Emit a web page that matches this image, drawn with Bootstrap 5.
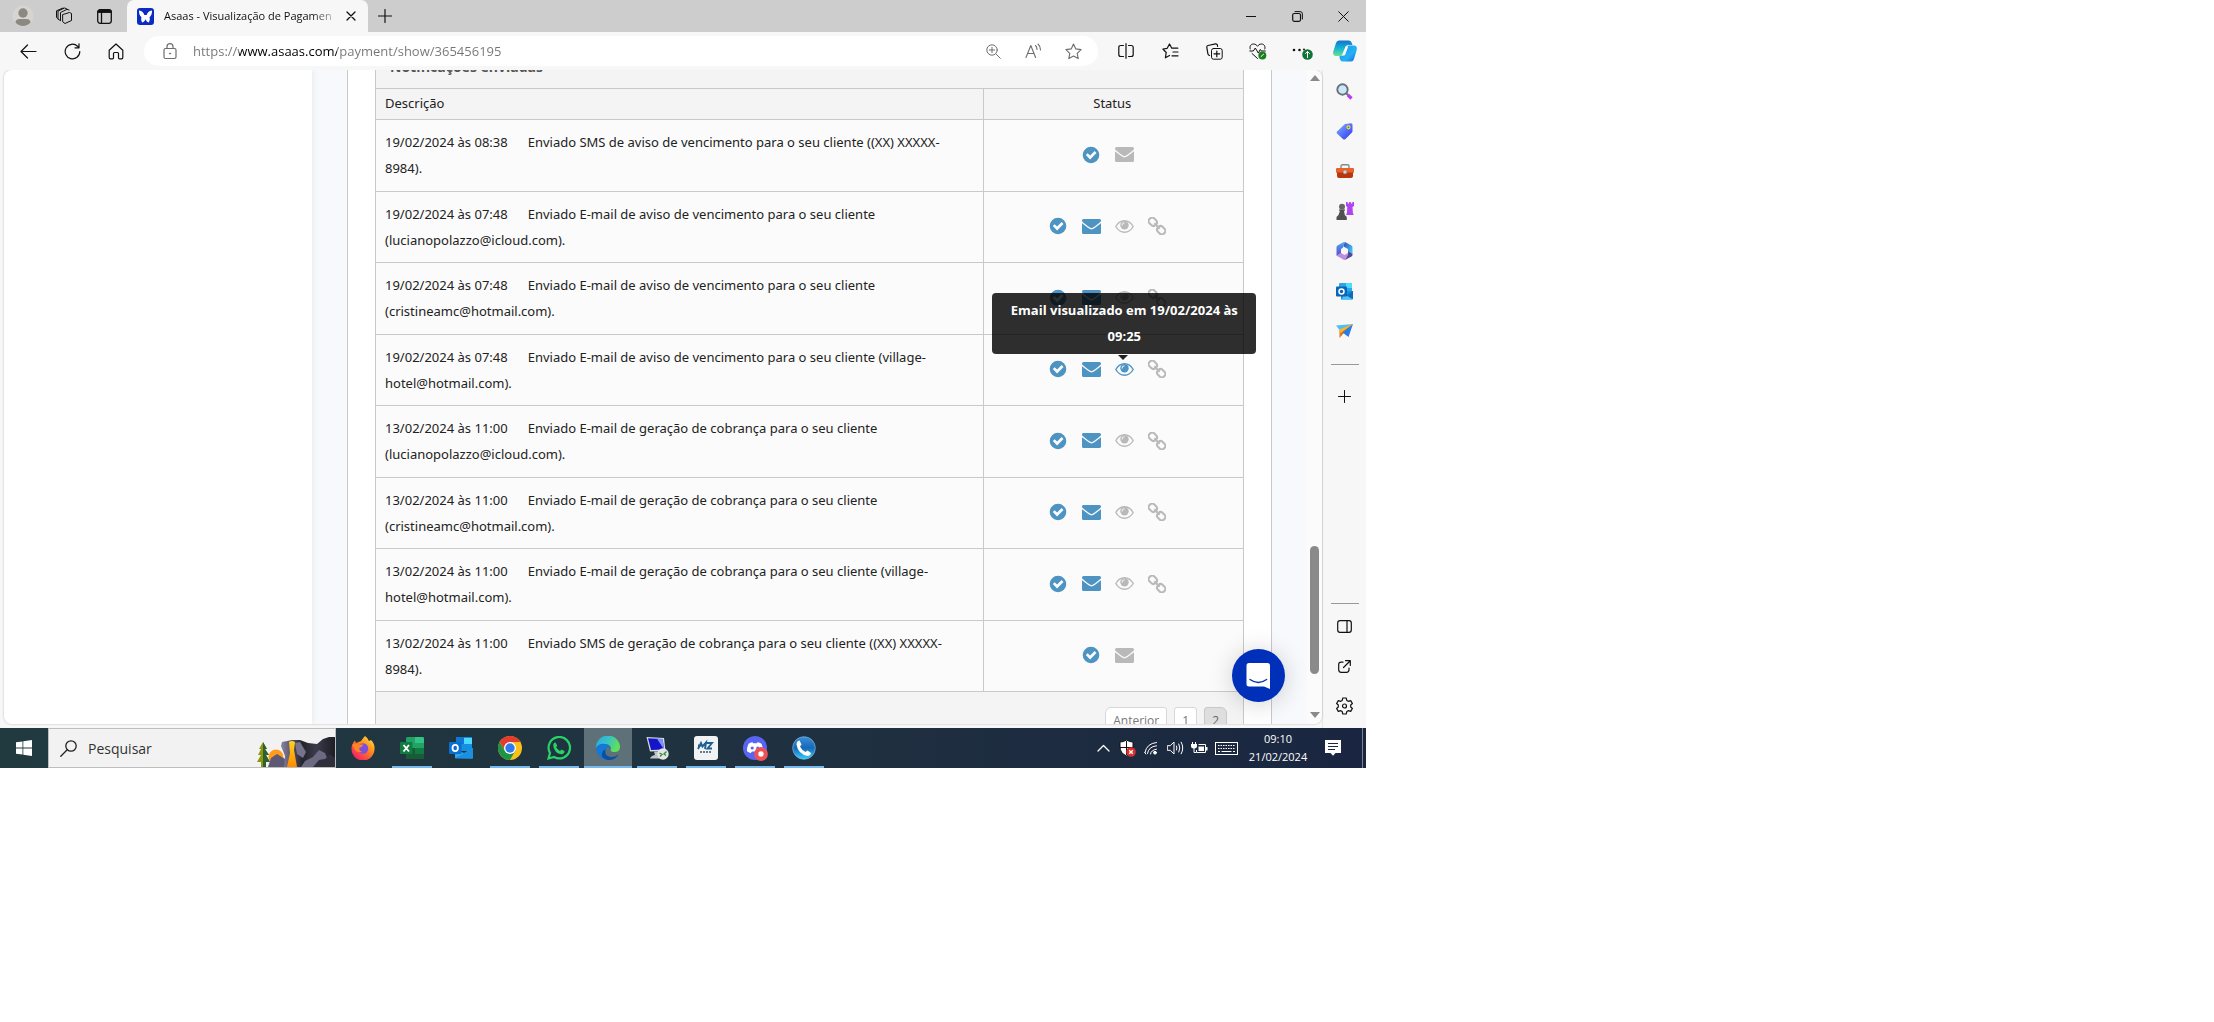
<!DOCTYPE html>
<html lang="pt-BR">
<head>
    <meta charset="UTF-8">
    <meta name="viewport" content="width=device-width, initial-scale=1">
    <title>Asaas - Visualização de Pagamento</title>
    <link href="https://cdn.jsdelivr.net/npm/bootstrap@5.3.0/dist/css/bootstrap.min.css" rel="stylesheet">
    <style>
        :root {
            --line: #c9c9c9;
            --azul: #4e94c3;
            --cinza: #b9b9b9;
        }
        body {
            font-family: "Open Sans", "Noto Sans", sans-serif;
            font-size: 13px;
            line-height: 26px;
            color: #222;
            background: #fff;
        }
        button, input { font: inherit; color: inherit; }
        button { background: none; border: 0; padding: 0; }
        svg { display: block; flex: none; }
        .ln { fill: none; stroke: currentColor; stroke-linecap: round; stroke-linejoin: round; }

        .screen-grid {
            display: grid;
            height: 100vh;
            grid-template-columns: minmax(0, 1366fr) 848fr;
            grid-template-rows: minmax(0, 768fr) 254fr;
        }

        /* navegador */
        .tab-strip { height: 32px; background: #cdcdcd; padding-left: 2px; color: #111; }
        .strip-btn { width: 41px; height: 32px; }
        .tab-active { width: 241px; height: 32px; margin-left: 2px; padding: 0 8px 0 10px; background: #f7f7f7; border-radius: 7px 7px 0 0; }
        .tab-title { font-size: 11px; white-space: nowrap; margin-left: 10px;
            -webkit-mask-image: linear-gradient(to right, #000 88%, rgba(0, 0, 0, .3)); mask-image: linear-gradient(to right, #000 88%, rgba(0, 0, 0, .3)); }
        .tab-close { width: 18px; height: 18px; }
        .new-tab { width: 34px; height: 32px; }
        .win-btn { width: 46px; height: 32px; }
        .tool-bar { height: 38px; background: #f7f7f7; padding-left: 6px; color: #111; }
        .tool-btn { width: 44px; height: 36px; }
        .copilot-btn { width: 42px; height: 36px; }
        .address-pill { height: 30px; margin: 0 6px; padding: 0 5px 0 14px; border-radius: 15px; background: #fff; color: #6e6e6e; }
        .address-pill button { width: 40px; height: 30px; }
        .address-pill .lock-btn { width: 24px; }
        .url-input {
            font-size: 13px;
            border: 0;
            outline: 0;
            padding: 0;
            margin-left: 11px;
            height: 30px;
            color: transparent;
            background: linear-gradient(to right, #757575 46px, #000 46px, #000 144px, #757575 144px);
            -webkit-background-clip: text;
            background-clip: text;
        }

        /* janela da página */
        .browser-body { background: #f7f7f7; }
        .page-view { margin: 0 0 4px 4px; background: #f7f9fc; border-radius: 8px; box-shadow: 0 0 2px #aaa; overflow: hidden; }
        .side-blank { width: 308px; background: #fff; box-shadow: 0 0 6px #e2e2e2; }
        .panel-box { margin: 0 35px; padding: 0 27px; background: #fff; border: solid var(--line); border-width: 0 1px; }
        .notif-title { height: 18px; padding: 0 0 8px 14px; background: #f4f4f4; border: solid var(--line); border-width: 0 1px; font-weight: 700; font-size: 14px; color: #555; overflow: hidden; }
        .notif-table { height: 604px; table-layout: fixed; margin: 0; font-family: "Noto Sans", "Open Sans", sans-serif; --bs-table-bg: #fbfbfb; --bs-table-color: #222; --bs-table-border-color: var(--line); border-color: var(--line); color: #222; }
        .notif-table > :not(caption) > * > * { padding: 0 11px 0 9px; vertical-align: middle; background: #fbfbfb; }
        .notif-table > tbody > tr > td { height: 71px; }
        .notif-table > thead > tr > th { height: 31px; padding-bottom: 2px; font-weight: 400; background: #f4f4f4; }
        .notif-table .col-desc { width: 70%; }
        .notif-table time { margin-right: 20px; }
        .st { display: inline-flex; position: relative; width: 24px; height: 20px; margin: 0 9px 4px 0; vertical-align: middle; align-items: center; justify-content: center; color: var(--cinza); }
        .st.on { color: var(--azul); }
        .tip-box {
            position: absolute; left: 50%; bottom: 25px; z-index: 5;
            width: 264px; margin-left: -132px; padding: 4px 12px 5px;
            border-radius: 4px; background: rgba(0, 0, 0, .82);
            color: #fff; font-family: "Open Sans", sans-serif; font-weight: 700; text-align: center;
        }
        .tip-box::after { content: ""; position: absolute; left: 50%; top: 100%; margin: 1px 0 0 -6px; border: solid transparent; border-width: 5px 5px 0; border-top-color: #222; }
        .pager-row { height: 60px; padding: 15px 16px 0; background: #f4f4f4; border: solid var(--line); border-width: 0 1px; }
        .pager-row .page-link { height: 30px; padding: 0 7px; line-height: 26px; font-size: 12px; color: #777; border: 1px solid #d8d8d8; border-radius: 3px; background: #fff; }
        .pager-row .active > .page-link { background: #dedede; border-color: #c8c8c8; color: #666; }
        .scroll-track { width: 15px; background: #fbfbfb; color: #8a8a8a; }
        .scroll-track .thumb { width: 9px; border-radius: 5px; background: #8a8a8a; flex: 128 0 0; }
        .scroll-track .before-thumb { flex: 460 0 0; }
        .scroll-track .after-thumb { flex: 32 0 0; }
        .chat-btn { position: absolute; right: 37px; bottom: 22px; width: 53px; height: 53px; border-radius: 50%; background: #0030b9; box-shadow: 0 2px 24px rgba(0, 0, 0, .18); }

        .edge-bar { width: 44px; padding: 1px 0 2px; border-left: 1px solid #e6e6e6; color: #111; }
        .edge-bar button { width: 43px; height: 40px; }
        .edge-bar hr { width: 28px; margin: 13px 0 11px; border-color: #999; opacity: 1; }
        .edge-bar .low-line { margin: 0 0 2px; }

        /* barra de tarefas */
        .task-bar { height: 40px; background: linear-gradient(to right, #213a40, #1f3040 62%, #1a2641); color: #fff; }
        .start-btn { width: 48px; height: 40px; }
        .task-search { width: 288px; height: 40px; padding-left: 11px; background: #f2f2f2; border: 1px solid #bdbdbd; color: #222; }
        .task-search input { width: 100px; margin-left: 11px; border: 0; outline: 0; padding: 1px 0 0; background: none; font-size: 14px; }
        .task-search input::placeholder { color: #333; opacity: 1; }
        .app-list { gap: 1px; margin-left: 3px; }
        .app-btn { width: 48px; height: 40px; position: relative; }
        .app-btn.open::after { content: ""; position: absolute; left: 4px; right: 4px; bottom: 0; height: 2px; background: #76b9ed; }
        .app-btn.front { background: #5f7178; }
        .app-btn.front::after { left: 0; right: 0; }
        .tray-btn { width: 24px; height: 40px; }
        .tray-btn.wide { width: 30px; }
        .clock { width: 74px; font-size: 11px; line-height: 18px; }
        .note-btn { width: 36px; height: 40px; }
        .peek { width: 4px; margin-left: 11px; border-left: 1px solid #7b8494; }
    </style>
</head>
<body>

<!-- ícones usados em mais de um lugar -->
<svg class="d-none" aria-hidden="true">
    <symbol id="i-check" viewBox="0 0 18 18"><path fill="currentColor" fill-rule="evenodd" d="M9 .7a8.3 8.3 0 1 0 0 16.600a8.300 8.300 0 0 0 0-16.600zM3.800 9.100l1.900-1.900 2.400 2.400 4.500-4.500 1.900 1.900-6.400 6.400z"/></symbol>
    <symbol id="i-mail" viewBox="0 0 19 15"><path fill="currentColor" d="M1.500 0h16A1.500 1.500 0 0 1 19 1.500v.7c-2.500 2.700-5 4.200-7.500 6.100-1.400 1.100-2.600 1.100-4 0C5 6.400 2.500 4.900 0 2.200v-.7A1.500 1.500 0 0 1 1.500 0zM0 4.200c2.300 1.900 4.300 3.400 6.600 5.100 2 1.500 3.800 1.500 5.800 0 2.300-1.700 4.300-3.200 6.600-5.100v9.300a1.500 1.500 0 0 1-1.500 1.500h-16A1.500 1.500 0 0 1 0 13.500z"/></symbol>
    <symbol id="i-eye" viewBox="0 0 19 13"><path fill="none" stroke="currentColor" stroke-width="1.400" d="M.8 6.500C2.800 3 6 .8 9.500.8s6.700 2.200 8.700 5.700c-2 3.500-5.200 5.700-8.700 5.700S2.800 10 .8 6.500z"/><circle cx="9.500" cy="5.200" r="4.200" fill="currentColor"/><path d="M7 5.500a2.600 2.600 0 0 1 2.500-2.700" fill="none" stroke="#fbfbfb" stroke-width="1"/></symbol>
    <symbol id="i-link" viewBox="0 0 18 18"><g transform="rotate(45 9 9)" fill="none" stroke="currentColor" stroke-width="2"><rect x="-1.200" y="5.600" width="8.500" height="6.800" rx="3"/><rect x="10.700" y="5.600" width="8.500" height="6.800" rx="3"/><path d="M5.200 9h7.600"/></g></symbol>
</svg>

<div class="screen-grid">
    <div class="d-flex flex-column position-relative">

        <header>
            <div class="tab-strip d-flex align-items-center">
                <button class="strip-btn d-flex align-items-center justify-content-center" aria-label="Perfil">
                    <svg width="22" height="22" viewBox="0 0 22 22"><circle cx="11" cy="11" r="10.500" fill="#d8d5d0"/><circle cx="11" cy="8" r="4.700" fill="#8d8882"/><path d="M3.500 17.500q0-3.500 4-3.500h7q4 0 4 3.500a10 10 0 0 1-15 0z" fill="#8d8882"/></svg>
                </button>
                <button class="strip-btn d-flex align-items-center justify-content-center" aria-label="Workspaces">
                    <svg class="ln" width="18" height="18" viewBox="0 0 18 18"><path d="M8 7.500l6.500-2 2 1v7l-6.500 3-2-1.500zM5.500 13.500V5.500l6.500-3.200 2 .7M3 11.800V4L9.500 1l2 .7M3 11.800l-1.500-1.300V3.800L8 1M5.500 13.500l-2-1"/></svg>
                </button>
                <button class="strip-btn d-flex align-items-center justify-content-center" aria-label="Menu de guias">
                    <svg class="ln" width="15" height="15" viewBox="0 0 15 15"><rect x=".7" y=".7" width="13.600" height="13.600" rx="2.500" stroke-width="1.300"/><path d="M1 3h13M4.500 4v10" stroke-width="1.300"/><path d="M2 2.300h11" stroke-width="3"/></svg>
                </button>
                <div class="tab-active d-flex align-items-center">
                    <svg width="17" height="17" viewBox="0 0 17 17"><rect width="17" height="17" rx="3" fill="#0b2bc4"/><path d="M2 2.500c3 .5 4.800 2.200 5.300 4.500h2.400c.5-2.300 2.300-4 5.300-4.500.2 3-.8 5.500-2.500 6.700.6 1.600.4 3.600-.8 5.300-1.600-.6-2.700-1.700-3.200-3.200-.5 1.500-1.600 2.600-3.200 3.200-1.200-1.700-1.400-3.700-.8-5.300C2.800 8 1.800 5.500 2 2.500z" fill="#fff"/></svg>
                    <span class="tab-title">Asaas - Visualização de Pagamen</span>
                    <button class="tab-close d-flex align-items-center justify-content-center ms-auto" aria-label="Fechar guia">
                        <svg class="ln" width="10" height="10" viewBox="0 0 10 10"><path d="M1 1l8 8M9 1L1 9" stroke-width="1.300"/></svg>
                    </button>
                </div>
                <button class="new-tab d-flex align-items-center justify-content-center" aria-label="Nova guia">
                    <svg class="ln" width="14" height="14" viewBox="0 0 14 14"><path d="M7 .5v13M.5 7h13" stroke-width="1.200"/></svg>
                </button>
                <div class="d-flex ms-auto">
                    <button class="win-btn d-flex align-items-center justify-content-center" aria-label="Minimizar">
                        <svg class="ln" width="10" height="10" viewBox="0 0 10 10"><path d="M0 5.500h10"/></svg>
                    </button>
                    <button class="win-btn d-flex align-items-center justify-content-center" aria-label="Restaurar">
                        <svg class="ln" width="11" height="11" viewBox="0 0 11 11"><rect x=".7" y="2.500" width="7.800" height="7.800" rx="1.500" stroke-width="1.200"/><path d="M3 .6h5.200q2.200 0 2.200 2.200V8"/></svg>
                    </button>
                    <button class="win-btn d-flex align-items-center justify-content-center" aria-label="Fechar">
                        <svg class="ln" width="11" height="11" viewBox="0 0 11 11"><path d="M.7.7l9.600 9.600M10.300.7L.7 10.300"/></svg>
                    </button>
                </div>
            </div>

            <div class="tool-bar d-flex align-items-center">
                <button class="tool-btn d-flex align-items-center justify-content-center" aria-label="Voltar">
                    <svg class="ln" width="17" height="15" viewBox="0 0 17 15"><path d="M16 7.500H1M7.500 1L1 7.500 7.500 14" stroke-width="1.200"/></svg>
                </button>
                <button class="tool-btn d-flex align-items-center justify-content-center" aria-label="Atualizar">
                    <svg class="ln" width="17" height="17" viewBox="0 0 17 17"><path d="M15.800 8.500a7.300 7.300 0 1 1-2.300-5.300l1.500 1.500M15 .8v4h-4" stroke-width="1.200"/></svg>
                </button>
                <button class="tool-btn d-flex align-items-center justify-content-center" aria-label="Página inicial">
                    <svg class="ln" width="16" height="17" viewBox="0 0 16 17"><path d="M1.200 7.200L8 1l6.800 6.200v7.300q0 1.300-1.300 1.300h-2q-1 0-1-1V10.500q0-1-1-1h-3q-1 0-1 1v4.300q0 1-1 1h-2q-1.300 0-1.300-1.300z" stroke-width="1.200"/></svg>
                </button>
                <div class="address-pill d-flex align-items-center flex-grow-1">
                    <button class="lock-btn d-flex align-items-center justify-content-center" aria-label="Informações do site">
                        <svg class="ln" width="14" height="17" viewBox="0 0 14 17"><rect x="1" y="5.500" width="12" height="10" rx="1.500" stroke-width="1.200"/><path d="M4 5.500V3.700a3 3 0 0 1 6 0v1.800" stroke-width="1.200"/><circle cx="7" cy="10.500" r=".6" fill="currentColor"/></svg>
                    </button>
                    <input class="url-input flex-grow-1" type="text" aria-label="Endereço" value="https://www.asaas.com/payment/show/365456195">
                    <button class="d-flex align-items-center justify-content-center" aria-label="Zoom">
                        <svg class="ln" width="15" height="15" viewBox="0 0 15 15"><circle cx="6" cy="6" r="5.200"/><path d="M10 10l4.300 4.300M6 3.300v5.400M3.300 6h5.400"/></svg>
                    </button>
                    <button class="d-flex align-items-center justify-content-center" aria-label="Ler em voz alta">
                        <svg class="ln" width="17" height="16" viewBox="0 0 17 16"><path d="M1 14.500L5.800 2.500l4.800 12M2.600 10.500H9M10.500 2.500q1.500 1.500 1.500 4M13 1q2.500 2.200 2.500 6" stroke-width="1.100"/></svg>
                    </button>
                    <button class="d-flex align-items-center justify-content-center" aria-label="Adicionar aos favoritos">
                        <svg class="ln" width="17" height="17" viewBox="0 0 17 17"><path d="M8.500 1l2.300 4.900 5.300.7-3.900 3.700 1 5.300-4.700-2.600-4.700 2.600 1-5.300L.9 6.600l5.300-.7z" stroke-width="1.100"/></svg>
                    </button>
                </div>
                <button class="tool-btn d-flex align-items-center justify-content-center" aria-label="Tela dividida">
                    <svg class="ln" width="16" height="16" viewBox="0 0 16 16"><path d="M5.500 2.500H2.800Q.8 2.500.8 4.500v7q0 2 2 2h2.700M10.500 2.500h2.700q2 0 2 2v7q0 2-2 2h-2.700M8 .7v14.600" stroke-width="1.200"/></svg>
                </button>
                <button class="tool-btn d-flex align-items-center justify-content-center" aria-label="Favoritos">
                    <svg class="ln" width="17" height="16" viewBox="0 0 17 16"><path d="M9.800 5.200L7.500 1 5.200 5.300.9 6l3.300 3.500-.8 5.300 4.100-2.300M9.800 5.200h6M11 9h5M10 12.800h6" stroke-width="1.200"/></svg>
                </button>
                <button class="tool-btn d-flex align-items-center justify-content-center" aria-label="Coleções">
                    <svg class="ln" width="17" height="17" viewBox="0 0 17 17"><rect x="5.500" y="5.500" width="10.700" height="10.700" rx="2"/><path d="M10.800 8v5.700M8 10.800h5.700M3.500 12.500Q2.200 12 1.900 10.800L.8 4.300q-.2-1.500 1.200-1.800L9.500.8q1.500-.2 1.900 1.200l.2 1.300" stroke-width="1.200"/></svg>
                </button>
                <button class="tool-btn d-flex align-items-center justify-content-center" aria-label="Desempenho">
                    <svg width="18" height="17" viewBox="0 0 18 17"><path class="ln" d="M1.200 6C.3 3.200 2 1 4.500 1 6.500 1 7.500 2 8.500 3.300 9.500 2 10.500 1 12.500 1 15 1 16.700 3.200 15.800 6M.8 8h3.500l2-3 3 5 2-3.500 1 1.500h4M3 10.500l5.500 5"/><circle cx="13.300" cy="12.500" r="4" fill="#1a7f1f"/><path d="M11.800 13.800l3-2.800" stroke="#fff"/></svg>
                </button>
                <button class="tool-btn d-flex align-items-center justify-content-center" aria-label="Configurações e mais">
                    <svg width="22" height="18" viewBox="0 0 22 18"><g fill="#111"><circle cx="3" cy="8" r="1.300"/><circle cx="8.500" cy="8" r="1.300"/><circle cx="13" cy="7.500" r="1"/></g><circle cx="16.500" cy="12.500" r="5.300" fill="#0f7438"/><path class="ln" d="M16.500 15.500v-6M14.500 11.500l2-2 2 2" style="stroke:#fff"/></svg>
                </button>
                <button class="copilot-btn d-flex align-items-center justify-content-center" aria-label="Copilot">
                    <svg width="24" height="22" viewBox="0 0 24 22">
                        <defs>
                            <linearGradient id="cpA" x1="0" y1="0" x2="0" y2="1"><stop offset="0" stop-color="#1472d0"/><stop offset=".5" stop-color="#12b4d5"/><stop offset="1" stop-color="#6ee08c"/></linearGradient>
                            <linearGradient id="cpB" x1="0" y1="0" x2="1" y2="1"><stop offset="0" stop-color="#2a8cf0"/><stop offset=".6" stop-color="#22b3f5"/><stop offset="1" stop-color="#1b5fd8"/></linearGradient>
                        </defs>
                        <path d="M6 .5h10q2 0 2.800 2.500l.7 2H15q-2 0-2.700 2.500L10.500 14q-.6 2-2.500 2H3Q-.5 16 .3 11.500L3 3Q3.800.5 6 .5z" fill="url(#cpA)"/>
                        <path d="M18 21.500H9.500q-2 0-2.800-3L6.500 16H9q1.800 0 2.500-2.500L13.300 8q.7-2.500 2.700-2.500h5q3.500 0 2.700 4.500L21 19q-.8 2.500-3 2.500z" fill="url(#cpB)"/>
                        <path d="M12.500 6.500h2.700L12 15.300H9z" fill="#fff"/>
                    </svg>
                </button>
            </div>
        </header>

        <div class="browser-body d-flex flex-grow-1 overflow-hidden">
            <main class="page-view position-relative d-flex flex-grow-1">
                <div class="side-blank flex-shrink-0"></div>
                <section class="panel-box flex-grow-1">
                    <div class="notif-title d-flex align-items-end">Notificações enviadas</div>
                    <table class="table table-bordered notif-table">
                        <thead>
                        <tr>
                            <th class="col-desc" scope="col">Descrição</th>
                            <th class="text-center" scope="col">Status</th>
                        </tr>
                        </thead>
                        <tbody>
                        <tr>
                            <td><time>19/02/2024 às 08:38</time>Enviado SMS de aviso de vencimento para o seu cliente ((XX) XXXXX-8984).</td>
                            <td class="text-center text-nowrap"><span class="st on"><svg width="18" height="18"><use href="#i-check"/></svg></span><span class="st"><svg width="19" height="15"><use href="#i-mail"/></svg></span></td>
                        </tr>
                        <tr>
                            <td><time>19/02/2024 às 07:48</time>Enviado E-mail de aviso de vencimento para o seu cliente (lucianopolazzo@icloud.com).</td>
                            <td class="text-center text-nowrap"><span class="st on"><svg width="18" height="18"><use href="#i-check"/></svg></span><span class="st on"><svg width="19" height="15"><use href="#i-mail"/></svg></span><span class="st"><svg width="19" height="13"><use href="#i-eye"/></svg></span><span class="st"><svg width="18" height="18"><use href="#i-link"/></svg></span></td>
                        </tr>
                        <tr>
                            <td><time>19/02/2024 às 07:48</time>Enviado E-mail de aviso de vencimento para o seu cliente (cristineamc@hotmail.com).</td>
                            <td class="text-center text-nowrap"><span class="st on"><svg width="18" height="18"><use href="#i-check"/></svg></span><span class="st on"><svg width="19" height="15"><use href="#i-mail"/></svg></span><span class="st"><svg width="19" height="13"><use href="#i-eye"/></svg></span><span class="st"><svg width="18" height="18"><use href="#i-link"/></svg></span></td>
                        </tr>
                        <tr>
                            <td><time>19/02/2024 às 07:48</time>Enviado E-mail de aviso de vencimento para o seu cliente (village-hotel@hotmail.com).</td>
                            <td class="text-center text-nowrap"><span class="st on"><svg width="18" height="18"><use href="#i-check"/></svg></span><span class="st on"><svg width="19" height="15"><use href="#i-mail"/></svg></span><span class="st on"><svg width="19" height="13"><use href="#i-eye"/></svg><span class="tip-box text-wrap" role="tooltip">Email visualizado em 19/02/2024 às 09:25</span></span><span class="st"><svg width="18" height="18"><use href="#i-link"/></svg></span></td>
                        </tr>
                        <tr>
                            <td><time>13/02/2024 às 11:00</time>Enviado E-mail de geração de cobrança para o seu cliente (lucianopolazzo@icloud.com).</td>
                            <td class="text-center text-nowrap"><span class="st on"><svg width="18" height="18"><use href="#i-check"/></svg></span><span class="st on"><svg width="19" height="15"><use href="#i-mail"/></svg></span><span class="st"><svg width="19" height="13"><use href="#i-eye"/></svg></span><span class="st"><svg width="18" height="18"><use href="#i-link"/></svg></span></td>
                        </tr>
                        <tr>
                            <td><time>13/02/2024 às 11:00</time>Enviado E-mail de geração de cobrança para o seu cliente (cristineamc@hotmail.com).</td>
                            <td class="text-center text-nowrap"><span class="st on"><svg width="18" height="18"><use href="#i-check"/></svg></span><span class="st on"><svg width="19" height="15"><use href="#i-mail"/></svg></span><span class="st"><svg width="19" height="13"><use href="#i-eye"/></svg></span><span class="st"><svg width="18" height="18"><use href="#i-link"/></svg></span></td>
                        </tr>
                        <tr>
                            <td><time>13/02/2024 às 11:00</time>Enviado E-mail de geração de cobrança para o seu cliente (village-hotel@hotmail.com).</td>
                            <td class="text-center text-nowrap"><span class="st on"><svg width="18" height="18"><use href="#i-check"/></svg></span><span class="st on"><svg width="19" height="15"><use href="#i-mail"/></svg></span><span class="st"><svg width="19" height="13"><use href="#i-eye"/></svg></span><span class="st"><svg width="18" height="18"><use href="#i-link"/></svg></span></td>
                        </tr>
                        <tr>
                            <td><time>13/02/2024 às 11:00</time>Enviado SMS de geração de cobrança para o seu cliente ((XX) XXXXX-8984).</td>
                            <td class="text-center text-nowrap"><span class="st on"><svg width="18" height="18"><use href="#i-check"/></svg></span><span class="st"><svg width="19" height="15"><use href="#i-mail"/></svg></span></td>
                        </tr>
                        </tbody>
                    </table>
                    <nav class="pager-row" aria-label="Paginação">
                        <ul class="pagination justify-content-end gap-2 m-0">
                            <li class="page-item"><a class="page-link" href="#">Anterior</a></li>
                            <li class="page-item"><a class="page-link" href="#">1</a></li>
                            <li class="page-item active" aria-current="page"><a class="page-link" href="#">2</a></li>
                        </ul>
                    </nav>
                </section>
                <div class="scroll-track d-flex flex-column align-items-center flex-shrink-0" aria-hidden="true">
                    <svg width="10" height="16" viewBox="0 0 10 16"><path d="M0 11l5-6 5 6z" fill="currentColor"/></svg>
                    <span class="before-thumb"></span>
                    <span class="thumb"></span>
                    <span class="after-thumb"></span>
                    <svg width="10" height="18" viewBox="0 0 10 18"><path d="M0 6l5 6 5-6z" fill="currentColor"/></svg>
                </div>
                <button class="chat-btn d-flex align-items-center justify-content-center" aria-label="Abrir chat">
                    <svg width="25" height="28" viewBox="0 0 25 28"><path d="M3 1h18.500q2.500 0 2.500 2.500V27l-6-2.600H3q-2.500 0-2.500-2.500V3.500Q.5 1 3 1z" fill="#fff"/><path d="M4 17.500q8.300 6 16.600 0" fill="none" stroke="#0030b9" stroke-width="1.400" stroke-linecap="round"/></svg>
                </button>
            </main>

            <aside class="edge-bar d-flex flex-column align-items-center flex-shrink-0">
                <button class="d-flex align-items-center justify-content-center" aria-label="Pesquisar">
                    <svg width="17" height="17" viewBox="0 0 17 17"><circle cx="6.500" cy="6.500" r="5.200" fill="#c9e8f8" stroke="#6a6f78" stroke-width="1.900"/><path d="M10 10l2 2" stroke="#6a6f78" stroke-width="2"/><path d="M11.800 11.800l3.700 3.700" stroke="#b93bf2" stroke-width="3.200"/></svg>
                </button>
                <button class="d-flex align-items-center justify-content-center" aria-label="Compras">
                    <svg width="17" height="17" viewBox="0 0 17 17"><defs><linearGradient id="tagG" x1="0" y1="0" x2="1" y2="1"><stop offset="0" stop-color="#7db8ff"/><stop offset="1" stop-color="#3130f0"/></linearGradient></defs><path d="M9 1l6-.8q1.500 0 1.500 1.500V8q0 1-.8 1.700l-6.500 6.500q-1 .8-2 0L1 10.500q-1-1 0-2z" fill="url(#tagG)"/><circle cx="12.500" cy="4.300" r="1.500" fill="#6b6a7c" stroke="#ffd83b" stroke-width="1.200"/></svg>
                </button>
                <button class="d-flex align-items-center justify-content-center" aria-label="Ferramentas">
                    <svg width="18" height="14" viewBox="0 0 18 14"><path d="M5 4V2.200Q5 .8 6.500.8h5Q13 .8 13 2.200V4" fill="none" stroke="#888" stroke-width="1.400"/><rect x="0" y="4" width="18" height="5" rx="1" fill="#e8622a"/><path d="M1 8.500h16V12q0 2-2 2H3q-2 0-2-2z" fill="#b9370f"/><circle cx="9" cy="8" r="2" fill="#cfd3d6" stroke="#777" stroke-width=".5"/></svg>
                </button>
                <button class="d-flex align-items-center justify-content-center" aria-label="Jogos">
                    <svg width="18" height="18" viewBox="0 0 18 18"><path d="M10 0h1.700v1.500h1.400V0h1.800v1.500h1.400V0H18v4l-1.500 1 .4 6 .9 2H10l.9-2 .4-6L10 4z" fill="#b044f0"/><circle cx="6" cy="4.700" r="3" fill="#666"/><path d="M3 7.500h6v1.300H8l.8 4.200 2 2V18H.5v-3l2-2L4 8.800H3z" fill="#505050"/></svg>
                </button>
                <button class="d-flex align-items-center justify-content-center" aria-label="Microsoft 365">
                    <svg width="17" height="18" viewBox="0 0 17 18">
                        <defs>
                            <linearGradient id="msA" x1="0" y1="0" x2="1" y2=".6"><stop offset="0" stop-color="#3a3fb8"/><stop offset="1" stop-color="#3cc3f2"/></linearGradient>
                            <linearGradient id="msB" x1="0" y1="0" x2="0" y2="1"><stop offset="0" stop-color="#4aa5ee"/><stop offset="1" stop-color="#5a50cf"/></linearGradient>
                        </defs>
                        <path d="M9 0l6.500 3.500q1 .6 1 1.700V12L12 9.500V7L7 4.200z" fill="url(#msA)"/>
                        <path d="M9 0L7 4.200v1.600L5 7v4.500L.5 13.800V5.300q0-1.200 1-1.800L7.500.3Q8.300-.1 9 0z" fill="url(#msB)"/>
                        <path d="M.5 13.500L5 11l3.500 2L12 11v2.500l-3 4.300q-.6.200-1.300-.1l-6.200-3.400q-.8-.4-1-.8z" fill="#bb8ee0"/>
                        <path d="M12 9.300l4.500 2.500v1.200q0 .8-1 1.400L9 17.900 12 13z" fill="#514796"/>
                    </svg>
                </button>
                <button class="d-flex align-items-center justify-content-center" aria-label="Outlook">
                    <svg width="17" height="17" viewBox="0 0 17 17"><rect x="3" y="0" width="13" height="9" rx="1" fill="#28a8ea"/><rect x="10" y="0" width="6" height="5" fill="#50d9ff"/><path d="M5 8h12v7q0 1.500-1.500 1.500H5z" fill="#1490df"/><path d="M8 14l9-6v8z" fill="#0f6cb8"/><path d="M8 11l9 5.500H6z" fill="#4fc3f5"/><rect x="0" y="3.500" width="11" height="10" rx="1" fill="#0a64b8"/><circle cx="5.500" cy="8.500" r="2.500" fill="none" stroke="#fff" stroke-width="1.500"/></svg>
                </button>
                <button class="d-flex align-items-center justify-content-center" aria-label="Drop">
                    <svg width="17" height="14" viewBox="0 0 17 14"><path d="M0 1.500L17 0 4 6.500z" fill="#4bc0f5"/><path d="M17 0L3.500 6.200V14l4-4.500z" fill="#e0761b"/><path d="M17 0L6.500 8.500 12.500 13z" fill="#2a7de1"/><path d="M17 0L2.500 6l2 3z" fill="#ffb52a"/></svg>
                </button>
                <hr>
                <button class="d-flex align-items-center justify-content-center" aria-label="Personalizar">
                    <svg class="ln" width="13" height="13" viewBox="0 0 13 13"><path d="M6.500.5v12M.5 6.500h12"/></svg>
                </button>
                <hr class="low-line mt-auto">
                <button class="d-flex align-items-center justify-content-center" aria-label="Ocultar barra lateral">
                    <svg class="ln" width="15" height="13" viewBox="0 0 15 13"><rect x=".7" y=".7" width="13.600" height="11.600" rx="2.300" stroke-width="1.200"/><path d="M10 1v11" stroke-width="1.200"/></svg>
                </button>
                <button class="d-flex align-items-center justify-content-center" aria-label="Abrir em nova janela">
                    <svg class="ln" width="13" height="13" viewBox="0 0 13 13"><path d="M5 2.200H3Q.7 2.200.7 4.500v5.300q0 2.500 2.500 2.500h5.300q2.500 0 2.500-2.500V8M7.500.7h4.800v4.800M12 1L5.500 7.500" stroke-width="1.200"/></svg>
                </button>
                <button class="d-flex align-items-center justify-content-center" aria-label="Configurações">
                    <svg class="ln" width="17" height="18" viewBox="0 0 17 18"><path d="M6.800 1h3.400l.6 2.400 1.500.9 2.400-.7 1.700 2.900L14.700 8v2l1.700 1.500-1.700 2.900-2.400-.7-1.500.9-.6 2.400H6.800l-.6-2.400-1.500-.9-2.400.7-1.700-2.900L2.300 10V8L.6 6.500l1.700-2.900 2.400.7 1.500-.9z" stroke-width="1.200"/><circle cx="8.500" cy="9" r="2" stroke-width="1.200"/></svg>
                </button>
            </aside>
        </div>

        <footer class="task-bar d-flex align-items-center flex-shrink-0">
            <button class="start-btn d-flex align-items-center justify-content-center" aria-label="Iniciar">
                <svg width="16" height="16" viewBox="0 0 16 16"><path d="M0 2.300L6.500 1.400v6.200H0zM7.300 1.300L16 0v7.600H7.300zM0 8.400h6.500v6.200L0 13.700zM7.300 8.400H16V16l-8.700-1.300z" fill="#fff"/></svg>
            </button>
            <div class="task-search d-flex align-items-center">
                <svg class="ln" width="17" height="17" viewBox="0 0 17 17"><circle cx="11" cy="6" r="5.200" stroke-width="1.300"/><path d="M7.200 9.800L.8 16.200" stroke-width="1.300"/></svg>
                <input type="text" placeholder="Pesquisar" aria-label="Pesquisar">
                <svg class="ms-auto align-self-end" width="78" height="30" viewBox="0 0 78 30">
                    <defs>
                        <linearGradient id="rockG" x1="0" y1="0" x2="1" y2="0"><stop offset="0" stop-color="#8a84a0"/><stop offset=".2" stop-color="#55536a"/><stop offset=".4" stop-color="#23242d"/><stop offset=".65" stop-color="#3c3b4c"/><stop offset="1" stop-color="#1c1d25"/></linearGradient>
                        <linearGradient id="fallG" x1="0" y1="0" x2="0" y2="1"><stop offset="0" stop-color="#ffd21e"/><stop offset="1" stop-color="#ff8a00"/></linearGradient>
                    </defs>
                    <circle cx="19" cy="20" r="7.500" fill="#ff9a1f"/>
                    <path d="M11 30l3-9 6-4 8 5 1 8z" fill="#5d5873"/>
                    <path d="M27 30l1-11-4-10 1-4 10-2h8l8 3 9 1 6-5 6-2h6v30z" fill="url(#rockG)"/>
                    <path d="M32 5q3-2 6 0l-1 8 3 17H30l3-14z" fill="url(#fallG)"/>
                    <path d="M38 6l5-1 6 10-3 6-6-4z" fill="#77738c"/>
                    <path d="M44 30l4-6 8-4 6-7 6 3 3 7-4 7z" fill="#6e6983"/>
                    <path d="M56 30l6-7 6-1 5-5 5 4v9z" fill="#2f2e3b"/>
                    <path d="M6 5l4 7H8l4 6H9l4 7H9v5H4v-5H0l4-7H1l3-6H2z" fill="#8a9610"/>
                    <path d="M6 5l4 7H8l4 6H9l4 7H9v5H6z" fill="#2d6130"/>
                </svg>
            </div>

            <div class="app-list d-flex">
                <button class="app-btn d-flex align-items-center justify-content-center" aria-label="Firefox">
                    <svg width="24" height="24" viewBox="0 0 24 24"><defs><linearGradient id="ffG" x1="1" y1="0" x2=".2" y2="1"><stop offset="0" stop-color="#fff04a"/><stop offset=".45" stop-color="#ff8a1d"/><stop offset="1" stop-color="#f5156c"/></linearGradient></defs><path d="M14 0q3 2 4 5l2-1q4 4 3.500 9A11.500 11.500 0 0 1 .5 13Q.5 8 4 4.500L5 7l5-2q2-3 4-5z" fill="url(#ffG)"/><circle cx="12" cy="12.500" r="5.200" fill="#7a4fe0"/><path d="M1 9q3-2 7-.5h4q0 2.500-3.500 3-1 3.500 3 4.500-6 1-8-3z" fill="#ff8426"/></svg>
                </button>
                <button class="app-btn open d-flex align-items-center justify-content-center" aria-label="Excel">
                    <svg width="24" height="22" viewBox="0 0 24 22"><rect x="6" y="0" width="18" height="22" rx="1.500" fill="#21a366"/><path d="M15 0h7.500Q24 0 24 1.500V6h-9z" fill="#33c481"/><rect x="6" y="11" width="9" height="11" fill="#185c37"/><rect x="15" y="11" width="9" height="5.500" fill="#107c41"/><path d="M15 16.500h9v4q0 1.500-1.500 1.500H15z" fill="#185c37"/><rect x="0" y="5" width="12.500" height="12" rx="1" fill="#107c41"/><path d="M3.500 8l5.500 6.500M9 8l-5.500 6.500" stroke="#fff" stroke-width="1.900"/></svg>
                </button>
                <button class="app-btn d-flex align-items-center justify-content-center" aria-label="Outlook">
                    <svg width="24" height="22" viewBox="0 0 24 22"><rect x="7" y="0" width="16" height="14" rx="1" fill="#1490df"/><rect x="15" y="1" width="8" height="6" fill="#50d9ff"/><rect x="7" y="0" width="8" height="7" fill="#0f78d4"/><path d="M6 21V12l9 4 9-5v9q0 1.500-1.500 1.500z" fill="#28a8ea"/><path d="M6 21.500L24 11v10.500z" fill="#1b8fe0"/><rect x="0" y="5" width="12.500" height="12" rx="1" fill="#0a6fd0"/><ellipse cx="6.200" cy="11" rx="2.700" ry="3.100" fill="none" stroke="#fff" stroke-width="1.800"/></svg>
                </button>
                <button class="app-btn open d-flex align-items-center justify-content-center" aria-label="Chrome">
                    <svg width="24" height="24" viewBox="0 0 24 24"><circle cx="12" cy="12" r="12" fill="#fbc116"/><path d="M1.600 6a12 12 0 0 1 20.800 0H12L7 14.500z" fill="#e33b2e"/><path d="M1.600 6A12 12 0 0 0 12 24l5.200-9H7z" fill="#1f9447"/><circle cx="12" cy="12" r="6" fill="#fff"/><circle cx="12" cy="12" r="4.700" fill="#2f7bed"/></svg>
                </button>
                <button class="app-btn open d-flex align-items-center justify-content-center" aria-label="WhatsApp">
                    <svg width="24" height="24" viewBox="0 0 24 24"><path d="M1.500 22.500L3 17A10.700 10.700 0 1 1 7 21z" fill="none" stroke="#27d366" stroke-width="2.200"/><path d="M8.500 6.500l1.700 3-1 1.700q1.300 2.600 3.800 3.700l1.500-1.300 3 1.500q.2 3-3.200 3.200Q7.500 17.300 6.300 10 6.200 6.800 8.500 6.500z" fill="#27d366"/></svg>
                </button>
                <button class="app-btn open front d-flex align-items-center justify-content-center" aria-label="Edge">
                    <svg width="24" height="24" viewBox="0 0 24 24"><defs><linearGradient id="edG" x1="0" y1="0" x2="1" y2=".4"><stop offset="0" stop-color="#2aa7e5"/><stop offset=".5" stop-color="#35c1c8"/><stop offset="1" stop-color="#5fe05a"/></linearGradient></defs><path d="M0 12A12 12 0 0 1 24 11q0 5-5.500 5-5 0-3.500-3 0-4-4.500-5Q4 7.500 0 12z" fill="url(#edG)"/><path d="M0 12Q3 7 9 8q4 .5 5.800 4-4-1.500-5.300 2-1 6 6 7.500l3 .5Q13 26 6 22.500 0 18.500 0 12z" fill="#1478d4"/><path d="M9.500 13.500Q8 20 14.500 21q4 .5 8-2.500-3.500 6-11 5.500Q4 22 6.500 16q1-2.500 3-2.500z" fill="#0d4f9e"/></svg>
                </button>
                <button class="app-btn open d-flex align-items-center justify-content-center" aria-label="Área de trabalho remota">
                    <svg width="24" height="24" viewBox="0 0 24 24"><path d="M1.500 1L19 2l1.500 13L5 15.500z" fill="#d9dde0"/><path d="M3 2.200l14.700.9L19 13.500 6 14z" fill="#1515c8"/><path d="M12 2.800l5.700.3L19 13.500z" fill="#7a91ff"/><path d="M9 15.500h6l1 4 2 3H5q1-3 5-3.500z" fill="#c0c5ca"/><circle cx="18" cy="18" r="5.700" fill="#e3e6e4"/><path d="M14.500 17l2.500 1.500-2 2M21.500 15.500L19 18l2 1.500" fill="none" stroke="#3a8a3f" stroke-width="1.400"/></svg>
                </button>
                <button class="app-btn open d-flex align-items-center justify-content-center" aria-label="MZ">
                    <svg width="24" height="24" viewBox="0 0 24 24"><rect width="24" height="24" rx="3" fill="#f1f2f4"/><path d="M4 13L7 7l1.500 3.500L12 6.500 11 13M12.500 7H18l-4.500 5.500H18M4 9.500h5" fill="none" stroke="#1d6094" stroke-width="1.900"/><path d="M6 16h12" stroke="#38536d" stroke-width="1.500" stroke-dasharray="2 1"/></svg>
                </button>
                <button class="app-btn open d-flex align-items-center justify-content-center" aria-label="Discord">
                    <svg width="25" height="25" viewBox="0 0 25 25"><circle cx="12" cy="12" r="12" fill="#5765f0"/><path d="M8 6.500l1.500-.3.7 1h3.600l.7-1 1.500.3 2.500 1.200q1.800 4 1.500 7.500l-3.500 2-1.500-1.700H9L7.500 17.200 4 15.200q-.3-3.500 1.500-7.500z" fill="#fff"/><circle cx="9.200" cy="12" r="1.600" fill="#5765f0"/><circle cx="14.800" cy="12" r="1.600" fill="#5765f0"/><circle cx="18" cy="18" r="6.900" fill="#ee5259"/><circle cx="18" cy="18" r="2.700" fill="#fff"/></svg>
                </button>
                <button class="app-btn open d-flex align-items-center justify-content-center" aria-label="Telefone">
                    <svg width="24" height="24" viewBox="0 0 24 24"><defs><linearGradient id="phG" x1="0" y1="0" x2="0" y2="1"><stop offset="0" stop-color="#3a8fd8"/><stop offset=".5" stop-color="#1768b8"/><stop offset="1" stop-color="#35d0ff"/></linearGradient></defs><circle cx="12" cy="12" r="11.300" fill="url(#phG)" stroke="#7fb9e6" stroke-width=".7"/><path d="M7.500 4.500l2 4-1.500 2q1.500 3.500 5.500 5.500l2-1.500 3.500 2.500q-.5 3-3.500 3Q6 18 4.500 8.500q0-3.500 3-4z" fill="#fff"/></svg>
                </button>
            </div>

            <div class="d-flex align-items-center ms-auto h-100">
                <button class="tray-btn d-flex align-items-center justify-content-center" aria-label="Mostrar ícones ocultos">
                    <svg class="ln" width="13" height="8" viewBox="0 0 13 8"><path d="M1 7l5.500-5.500L12 7" stroke-width="1.300"/></svg>
                </button>
                <button class="tray-btn d-flex align-items-center justify-content-center" aria-label="Segurança">
                    <svg width="17" height="17" viewBox="0 0 17 17"><path d="M7.500 0q3 2 6.500 2v5q0 6-6.500 9Q1 13 1 7V2q3.500 0 6.500-2z" fill="#fff" stroke="#111"/><path d="M7.500 1v14M1 7.500h13" stroke="#111"/><circle cx="12" cy="12" r="4.800" fill="#d9302c"/><path d="M10.200 10.200l3.600 3.600M13.800 10.200l-3.600 3.600" stroke="#fff" stroke-width="1.300"/></svg>
                </button>
                <button class="tray-btn d-flex align-items-center justify-content-center" aria-label="Wi-Fi">
                    <svg class="ln" width="14" height="14" viewBox="0 0 14 14"><path d="M1 11.500Q2.500 2.500 12.500 1.500M3.500 12.500q1-7 9-7.700M6.500 13q.5-4 6-4.800M.8 11.500l1 1.500"/><circle cx="11" cy="11.700" r="1.400" fill="currentColor"/></svg>
                </button>
                <button class="tray-btn d-flex align-items-center justify-content-center" aria-label="Volume">
                    <svg class="ln" width="17" height="14" viewBox="0 0 17 14"><path d="M.7 4.700h2.500L7 1v12L3.200 9.300H.7zM9.500 5q1 2 0 4M11.800 3q2.200 4 0 8M14.200 1.200q3.200 5.800 0 11.600"/></svg>
                </button>
                <button class="tray-btn d-flex align-items-center justify-content-center" aria-label="Bateria">
                    <svg width="17" height="12" viewBox="0 0 17 12"><path d="M1.500 0v2.500M4.500 0v2.500M3 5v5.500h2" fill="none" stroke="#fff"/><path d="M0 2h6v2Q6 6.500 3 6.500T0 4z" fill="#fff"/><path d="M7.500 2.500H14.500v8H5.500V8" fill="none" stroke="#fff"/><path d="M7.500 4.500H13v4.500H7.500zM15 5h1.500v3.500H15z" fill="#fff"/></svg>
                </button>
                <button class="tray-btn wide d-flex align-items-center justify-content-center" aria-label="Teclado">
                    <svg width="23" height="13" viewBox="0 0 23 13"><rect x=".5" y=".5" width="22" height="12" fill="none" stroke="#fff"/><path d="M3 3.500h17M3 6.500h17" stroke="#fff" stroke-dasharray="1.500 1"/><path d="M3 9.500h2M6.500 9.500h10M18 9.500h2" stroke="#fff"/></svg>
                </button>
                <button class="clock text-center" aria-label="Data e hora">09:10<br>21/02/2024</button>
                <button class="note-btn d-flex align-items-center justify-content-center" aria-label="Notificações">
                    <svg width="16" height="16" viewBox="0 0 16 16"><path d="M0 0h16v13h-5.500L8 15.700 5.500 13H0z" fill="#fff"/><path d="M3 3.500h10M3 6.500h10M3 9.500h7" stroke="#1b2740"/></svg>
                </button>
                <span class="peek h-100"></span>
            </div>
        </footer>
    </div>
</div>

<script src="https://cdn.jsdelivr.net/npm/bootstrap@5.3.0/dist/js/bootstrap.bundle.min.js"></script>
</body>
</html>
